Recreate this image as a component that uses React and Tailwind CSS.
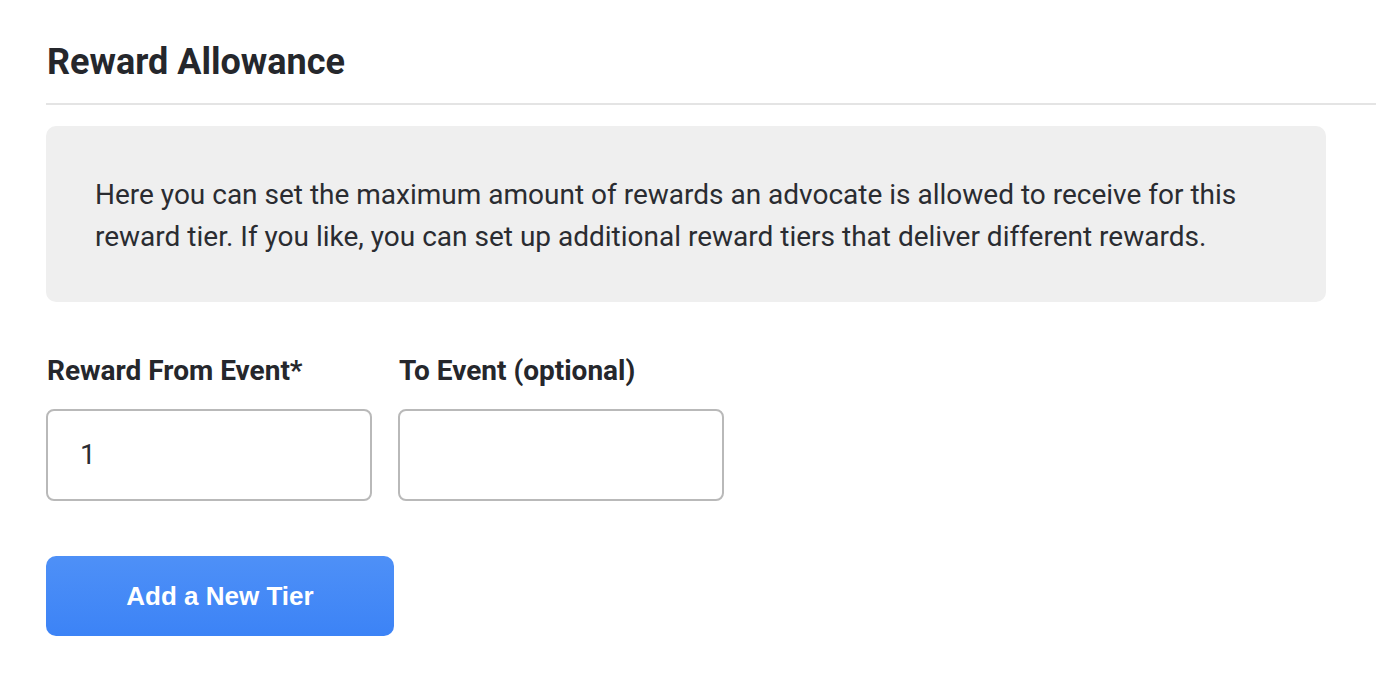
export default function App() {
  return (
    <div className="w-[1376px] h-[682px] bg-white overflow-hidden" style={{ fontFamily: "Roboto, 'Liberation Sans', sans-serif" }}>
      <div className="pl-[46px] pt-[40px]">
        <h1 className="text-[36px] leading-[44px] font-bold text-[#25272c] pl-[1px]">Reward Allowance</h1>
        <div className="mt-[19px] h-[2px] bg-[#e4e4e4]"></div>
        <div className="mt-[21px] w-[1280px] h-[176px] bg-[#efefef] rounded-[10px] pl-[49px] pt-[48px]">
          <p className="text-[28px] leading-[42px] text-[#2a2c31]">
            Here you can set the maximum amount of rewards an advocate is allowed to receive for this<br />
            reward tier. If you like, you can set up additional reward tiers that deliver different rewards.
          </p>
        </div>
        <div className="mt-[51px] flex gap-[26px]">
          <div className="flex flex-col">
            <label className="text-[28px] leading-[36px] font-bold text-[#25272c] pl-[1px]">Reward From Event*</label>
            <div className="mt-[20px] w-[326px] h-[92px] border-2 border-[#b9b9b9] rounded-[8px] flex items-center pl-[32px] text-[28px] text-[#2a2c31]">1</div>
          </div>
          <div className="flex flex-col">
            <label className="text-[28px] leading-[36px] font-bold text-[#25272c] pl-[1px]">To Event (optional)</label>
            <div className="mt-[20px] w-[326px] h-[92px] border-2 border-[#b9b9b9] rounded-[8px]"></div>
          </div>
        </div>
        <button className="mt-[55px] w-[348px] h-[80px] rounded-[10px] bg-gradient-to-b from-[#4e90f7] to-[#3c83f6] text-white text-[26px] font-bold" style={{ fontFamily: "'Liberation Sans', Arial, sans-serif" }}>
          Add a New Tier
        </button>
      </div>
    </div>
  );
}
